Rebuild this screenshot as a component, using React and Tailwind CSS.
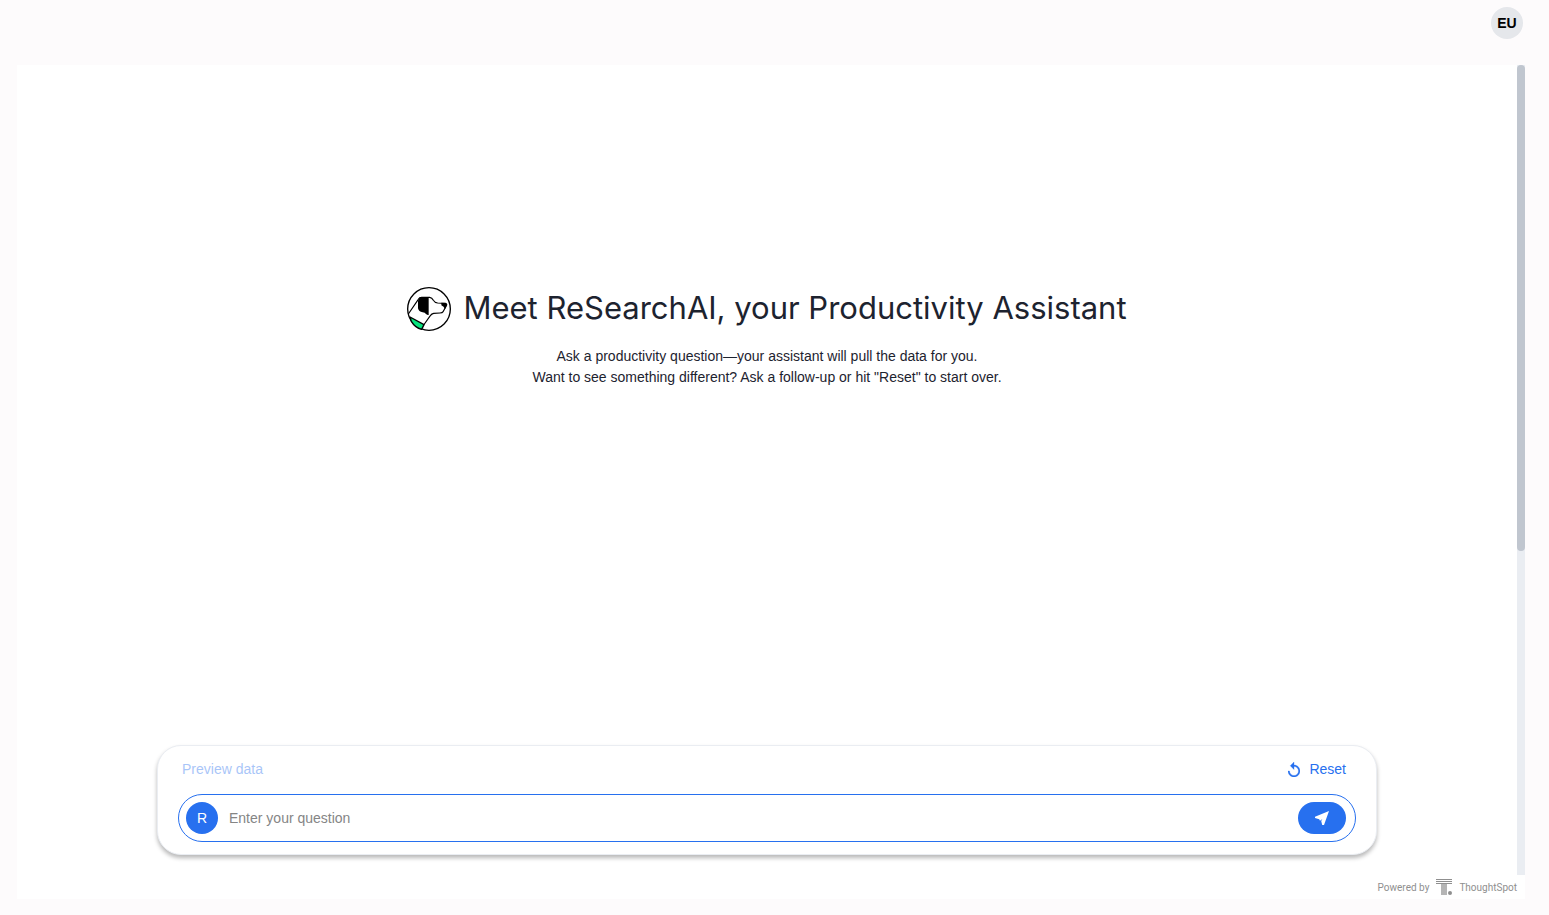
import { useState } from 'react'

function DogLogo() {
  return (
    <svg viewBox="18 20 132 132" className="size-11 shrink-0" fill="none" aria-hidden="true">
      <circle cx="84" cy="86" r="64" fill="#fff" stroke="#000" strokeWidth="4" />
      <path d="M27 110 L69 133 L62 147 Q42 142 31 123 Z" fill="#06e27c" stroke="#000" strokeWidth="4" strokeLinejoin="round" />
      <path d="M22 101 L52 57 Q55 51 62 51 L86 51 Q93 52 97 60 Q101 67 110 68 L134 69" stroke="#000" strokeWidth="3.5" strokeLinejoin="round" />
      <path d="M134 80 L127 93 Q124 98 117 98 L98 99 Q92 100 88 106 L68 134" stroke="#000" strokeWidth="3.5" strokeLinejoin="round" />
      <path d="M121 67 L136 68 Q141 71 138 77 L132 86 Q129 78 121 75 Z" fill="#000" />
      <path d="M57 51 L83 51 L83 104 Q79 105 75 101 Q72 97 65 96 Q53 94 51 84 L51 61 Z" fill="#000" />
    </svg>
  )
}

function ResetIcon() {
  return (
    <svg viewBox="4 1 16 20" className="h-[15px] w-3" fill="currentColor" stroke="currentColor" strokeWidth="0.4" aria-hidden="true">
      <path d="M12 5V1L7 6l5 5V7c3.31 0 6 2.69 6 6s-2.69 6-6 6-6-2.69-6-6H4c0 4.42 3.58 8 8 8s8-3.58 8-8-3.58-8-8-8z" />
    </svg>
  )
}

function SendIcon() {
  return (
    <svg viewBox="0 0 14 14" className="size-3.5" fill="currentColor" aria-hidden="true">
      <path d="M14 0 L9 14 L7.2 14 L6.2 10 L7.4 8 L5 9.8 L4.2 8.2 L0 7.1 L0 5.7 Z" />
    </svg>
  )
}

function ThoughtSpotLogo() {
  return (
    <svg viewBox="0 0 16 16" className="size-4" fill="#8f8f8f" aria-hidden="true">
      <path d="M0 0h16v1H0zM0 2h16v1H0zM0 4h16v1H0z" />
      <path d="M5 5h6v11H5z" fill="#b5b5b5" />
      <circle cx="14" cy="14" r="2" />
    </svg>
  )
}

function PromptPanel() {
  const [question, setQuestion] = useState('')

  return (
    <div className="mx-auto w-full max-w-[1220px] rounded-3xl border border-[#eaedf2] bg-white px-5 pt-[11px] pb-3 shadow-[0_3px_4px_rgba(0,0,0,0.28)]">
      <div className="flex h-6 items-center justify-between pr-2.5 pl-1 text-sm text-[#2770ef]">
        <button type="button" disabled className="opacity-40">Preview data</button>
        <button type="button" className="flex items-center gap-[9px]">
          <ResetIcon />
          Reset
        </button>
      </div>
      <form
        className="mt-[13px] flex h-12 items-center rounded-full border border-[#2770ef] px-[7px]"
        onSubmit={(e) => e.preventDefault()}
      >
        <span className="flex size-8 shrink-0 items-center justify-center rounded-full bg-[#2770ef] text-sm text-white">R</span>
        <input
          type="text"
          aria-label="Enter your question"
          placeholder="Enter your question"
          value={question}
          onChange={(e) => setQuestion(e.target.value)}
          className="min-w-0 flex-1 px-[11px] text-sm text-[#1d232f] outline-none placeholder:text-[#858585]"
        />
        <button type="submit" aria-label="Send" className="mr-0.5 flex h-8 w-12 shrink-0 items-center justify-center rounded-full bg-[#2770ef] text-white">
          <SendIcon />
        </button>
      </form>
    </div>
  )
}

export default function App() {
  return (
    <div className="flex h-screen flex-col bg-[#fdfbfc] font-['Liberation_Sans',sans-serif] text-[#1d232f]">
      <header className="flex justify-end pt-[7px] pr-[26px] pb-[26px]">
        <button type="button" className="size-8 rounded-full bg-[#e5e7eb] text-sm font-bold text-black">
          EU
        </button>
      </header>

      <main className="mr-6 mb-4 ml-[17px] flex min-h-0 flex-1 flex-col bg-white">
        <div className="flex min-h-0 flex-1">
          <div className="flex min-w-0 flex-1 flex-col px-5 pb-5">
            <section className="flex flex-1 flex-col items-center justify-center pb-[135px] text-center">
              <div className="flex items-start gap-3">
                <DogLogo />
                <h1 className="font-[Inter,sans-serif] text-[31px] leading-[42px]">Meet ReSearchAI, your Productivity Assistant</h1>
              </div>
              <p className="mt-[15px] text-sm leading-[21px]">
                Ask a productivity question—your assistant will pull the data for you.
                <br />
                Want to see something different? Ask a follow-up or hit "Reset" to start over.
              </p>
            </section>
            <PromptPanel />
          </div>
          <div className="w-2 shrink-0 bg-[#eaedf2]">
            <div className="h-[60%] rounded-full bg-[#c0c6cf]" />
          </div>
        </div>
        <footer className="flex h-6 items-center justify-end gap-[7px] pr-2 font-[Roboto,sans-serif] text-[10px] text-[#8f8f8f]">
          <span>Powered by</span>
          <ThoughtSpotLogo />
          <span>ThoughtSpot</span>
        </footer>
      </main>
    </div>
  )
}
